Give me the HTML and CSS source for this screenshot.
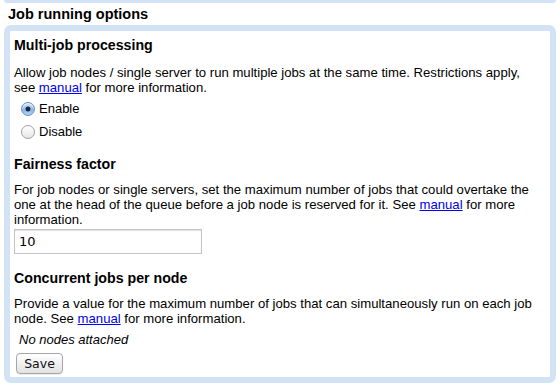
FILE: index.html
```html
<!DOCTYPE html>
<html>
<head>
<meta charset="utf-8">
<link rel="stylesheet" href="styles.css">
</head>
<body>
<div class="prev-box"></div>
<h2 class="title">Job running options</h2>
<div class="box">
  <h3 class="heading first">Multi-job processing</h3>
  <p class="desc">Allow job nodes / single server to run multiple jobs at the same time. Restrictions apply, see <a href="#">manual</a> for more information.</p>
  <div class="radios">
    <label class="radio-row"><input type="radio" name="multi" class="radio" checked><span>Enable</span></label>
    <label class="radio-row"><input type="radio" name="multi" class="radio"><span>Disable</span></label>
  </div>
  <h3 class="heading fair">Fairness factor</h3>
  <p class="desc tight">For job nodes or single servers, set the maximum number of jobs that could overtake the one at the head of the queue before a job node is reserved for it. See <a href="#">manual</a> for more information.</p>
  <input class="field" type="text" value="10">
  <h3 class="heading conc">Concurrent jobs per node</h3>
  <p class="desc conc-desc">Provide a value for the maximum number of jobs that can simultaneously run on each job node. See <a href="#">manual</a> for more information.</p>
  <p class="note">No nodes attached</p>
  <button class="save">Save</button>
</div>
</body>
</html>
```
FILE: styles.css
```css
html, body {
  margin: 0;
  padding: 0;
  background: #fff;
}
body {
  font-family: "Liberation Sans", Arial, sans-serif;
  color: #000;
  font-size: 13px;
}
.prev-box {
  height: 3px;
  margin: 0 4px;
  background: #d2e3f6;
  border-radius: 0 0 6px 6px;
}
.title {
  margin: 2px 0 0 8px;
  font-size: 14.5px;
  line-height: 18px;
  font-weight: bold;
  height: 20px;
}
.box {
  margin: 0 4px;
  border: 6px solid #d2e3f6;
  border-radius: 7px;
  padding: 5px 9px 3px 4px;
}
.heading {
  margin: 0;
  font-size: 14.2px;
  line-height: 18px;
  font-weight: bold;
}
.heading.fair {
  margin-top: 12px;
}
.heading.conc {
  margin-top: 15px;
}
.desc {
  margin: 11px 0 0 0;
  font-size: 13.15px;
  line-height: 15px;
}
.desc.tight {
  margin-top: 8.5px;
}
.desc.conc-desc {
  margin-top: 9.5px;
}
.desc a {
  color: #0000ee;
  text-decoration: underline;
}
.radios {
  display: flex;
  flex-direction: column;
  margin-top: 2px;
}
.radio-row {
  display: flex;
  align-items: center;
  height: 23px;
  gap: 4px;
}
.radio {
  appearance: none;
  -webkit-appearance: none;
  width: 14px;
  height: 14px;
  margin: 0 0 0 7px;
  border-radius: 50%;
  border: 1px solid #a0a0a0;
  background: linear-gradient(#ffffff, #e6e6e6);
  box-shadow: inset 0 1px 1px rgba(255,255,255,0.8);
}
.radio:checked {
  border-color: #6a8cba;
  background: radial-gradient(circle at 50% 50%, #1e2a3a 0, #1e2a3a 2.2px, transparent 2.8px), linear-gradient(#d3e6fb, #86b4ea 60%, #b6d4f6);
}
.field {
  display: block;
  margin: 2px 0 0 0;
  width: 188px;
  height: 25px;
  box-sizing: border-box;
  border: 1px solid #c4c4c4;
  box-shadow: inset 0 1px 1px rgba(0,0,0,0.12);
  padding: 0 0 0 4px;
  font-family: "DejaVu Sans", sans-serif;
  font-size: 13px;
  color: #000;
  outline: none;
}
.note {
  margin: 6px 0 0 5px;
  font-style: italic;
  line-height: 15px;
}
.save {
  display: block;
  margin: 6px 0 0 2px;
  width: 47px;
  height: 21px;
  padding: 0;
  border: 1px solid #a6a6a6;
  border-radius: 4px;
  background: linear-gradient(#ffffff, #f1f1f1 50%, #e2e2e2);
  box-shadow: 0 1px 1px rgba(0,0,0,0.08);
  font-family: "DejaVu Sans", sans-serif;
  font-size: 12.5px;
  color: #111;
}
```
